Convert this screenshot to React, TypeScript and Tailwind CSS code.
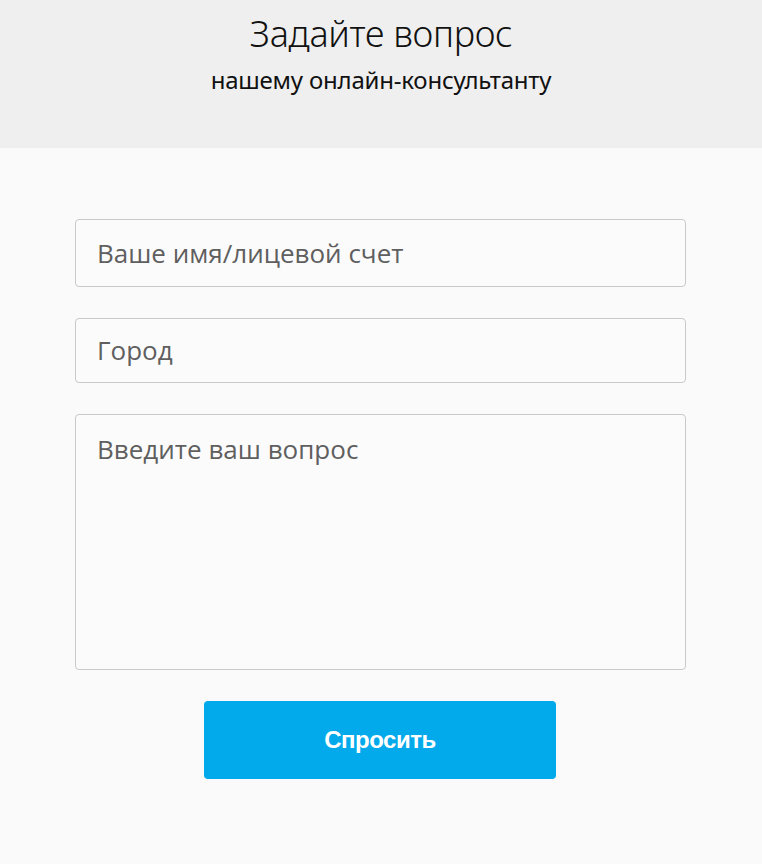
import React from "react";

export default function App() {
  return (
    <div className="w-[762px] h-[864px] bg-[#fafafa] flex flex-col" style={{ fontFamily: "'Open Sans', 'Noto Sans', sans-serif" }}>
      <div className="h-[148px] bg-[#efefef] flex flex-col items-center pt-[12px]">
        <div className="text-[36px] leading-[44px] text-[#111] font-light tracking-[-0.3px]" style={{ fontFamily: "'Noto Sans', sans-serif" }}>Задайте вопрос</div>
        <div className="text-[24px] leading-[30px] text-[#111] tracking-[-0.2px] mt-[9px]" style={{ fontFamily: "'Noto Sans', sans-serif" }}>нашему онлайн-консультанту</div>
      </div>
      <div className="flex flex-col items-start pl-[75px] pt-[71px]">
        <div className="w-[611px] h-[68px] border border-[#c9c9c9] rounded-[4px] bg-[#fbfbfb] flex items-center pl-[21px] text-[26px] text-[#5f5f5f]">
          Ваше имя/лицевой счет
        </div>
        <div className="w-[611px] h-[65px] mt-[31px] border border-[#c9c9c9] rounded-[4px] bg-[#fbfbfb] flex items-center pl-[21px] text-[26px] text-[#5f5f5f]">
          Город
        </div>
        <div className="w-[611px] h-[256px] mt-[31px] border border-[#c9c9c9] rounded-[4px] bg-[#fbfbfb] pl-[21px] pt-[16px] text-[26px] leading-[36px] text-[#5f5f5f]">
          Введите ваш вопрос
        </div>
        <button className="w-[352px] h-[78px] mt-[31px] ml-[129px] rounded-[4px] bg-[#03aaeb] text-white text-[24px] font-bold tracking-[-0.5px]" style={{ fontFamily: "'Liberation Sans', Arial, sans-serif" }}>
          Спросить
        </button>
      </div>
    </div>
  );
}
